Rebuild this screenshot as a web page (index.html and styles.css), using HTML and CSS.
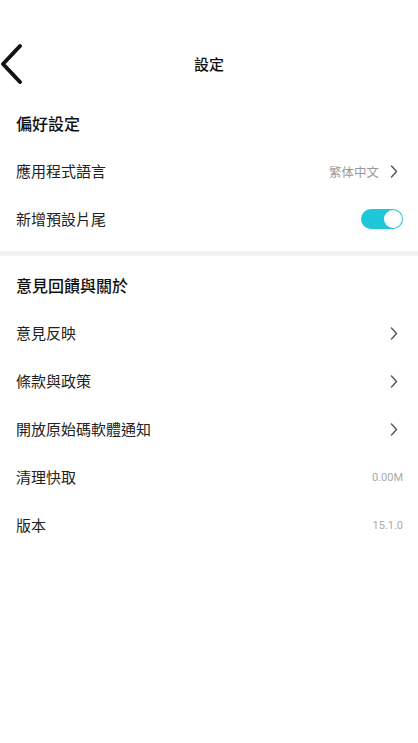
FILE: index.html
```html
<!DOCTYPE html>
<html lang="zh-Hant">
<head>
    <meta charset="UTF-8">
    <meta name="viewport" content="width=device-width, initial-scale=1.0">
    <title>設定</title>
    <link rel="stylesheet" href="styles.css">
</head>
<body>
    <div class="topbar">
        <svg class="back" width="26" height="44" viewBox="0 0 26 44">
            <path d="M20 4 L3 22 L20 40" fill="none" stroke="#111" stroke-width="4" stroke-linecap="round" stroke-linejoin="round"/>
        </svg>
        <div class="title">設定</div>
    </div>

    <div class="section first">
        <div class="section-head">偏好設定</div>
        <div class="row">
            <span class="label">應用程式語言</span>
            <span class="value lang">繁体中文</span>
            <svg class="arrow" width="8" height="13" viewBox="0 0 8 13">
                <path d="M1.5 1 L6.5 6.5 L1.5 12" fill="none" stroke="#555" stroke-width="1.4" stroke-linecap="round" stroke-linejoin="round"/>
            </svg>
        </div>
        <div class="row">
            <span class="label">新增預設片尾</span>
            <span class="switch on"><span class="knob"></span></span>
        </div>
    </div>

    <div class="divider"></div>

    <div class="section second">
        <div class="section-head">意見回饋與關於</div>
        <div class="row">
            <span class="label">意見反映</span>
            <svg class="arrow" width="8" height="13" viewBox="0 0 8 13">
                <path d="M1.5 1 L6.5 6.5 L1.5 12" fill="none" stroke="#555" stroke-width="1.4" stroke-linecap="round" stroke-linejoin="round"/>
            </svg>
        </div>
        <div class="row">
            <span class="label">條款與政策</span>
            <svg class="arrow" width="8" height="13" viewBox="0 0 8 13">
                <path d="M1.5 1 L6.5 6.5 L1.5 12" fill="none" stroke="#555" stroke-width="1.4" stroke-linecap="round" stroke-linejoin="round"/>
            </svg>
        </div>
        <div class="row">
            <span class="label">開放原始碼軟體通知</span>
            <svg class="arrow" width="8" height="13" viewBox="0 0 8 13">
                <path d="M1.5 1 L6.5 6.5 L1.5 12" fill="none" stroke="#555" stroke-width="1.4" stroke-linecap="round" stroke-linejoin="round"/>
            </svg>
        </div>
        <div class="row">
            <span class="label">清理快取</span>
            <span class="value num">0.00M</span>
        </div>
        <div class="row">
            <span class="label">版本</span>
            <span class="value num">15.1.0</span>
        </div>
    </div>
</body>
</html>
```

FILE: styles.css
```css
body {
    margin: 0;
    padding: 0;
    background-color: #fff;
    font-family: "Noto Sans CJK TC", "Noto Sans", sans-serif;
    color: #222;
}
.topbar {
    position: relative;
    margin-top: 40px;
    height: 48px;
    display: flex;
    align-items: center;
    justify-content: center;
}
.back {
    position: absolute;
    left: 0;
    top: 2px;
}
.title {
    font-size: 15px;
    font-weight: 500;
    color: #111;
    line-height: 20px;
}
.section {
    padding: 0 15px 0 16px;
}
.section.first {
    padding-top: 11px;
    padding-bottom: 8px;
}
.section.second {
    padding-top: 5px;
}
.section-head {
    height: 48px;
    display: flex;
    align-items: center;
    font-size: 16px;
    font-weight: 500;
    color: #111;
}
.row {
    height: 48px;
    display: flex;
    align-items: center;
}
.label {
    flex: 1;
    font-size: 15px;
    line-height: 20px;
    color: #222;
}
.value {
    color: #999;
}
.value.lang {
    font-size: 12.5px;
    margin-right: 11px;
}
.value.num {
    font-family: Roboto, sans-serif;
    font-size: 11px;
    color: #aaa;
}
.arrow {
    margin-right: 5px;
}
.divider {
    height: 5px;
    background-color: #f2f3f5;
}
.switch {
    width: 42px;
    height: 20px;
    border-radius: 10px;
    background-color: #1fc6d7;
    display: flex;
    align-items: center;
    justify-content: flex-end;
    box-sizing: border-box;
    padding: 0 1px;
}
.knob {
    width: 18px;
    height: 18px;
    border-radius: 50%;
    background-color: #fff;
}
```
